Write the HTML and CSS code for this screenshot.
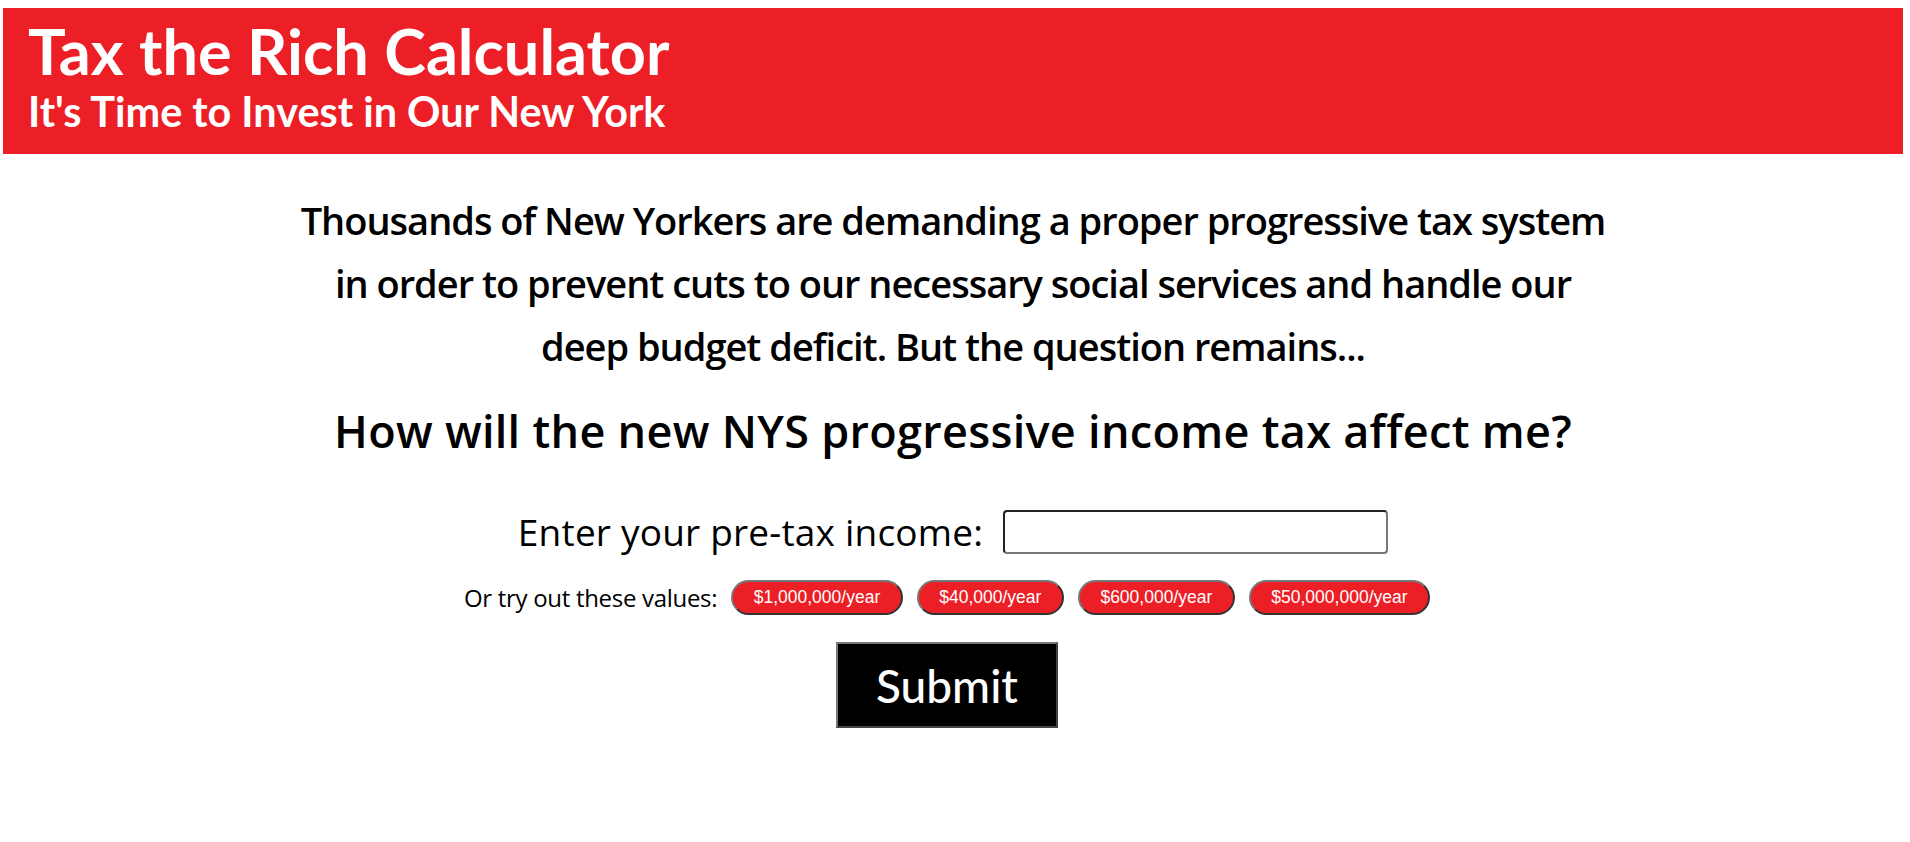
FILE: index.html
```html
<!DOCTYPE html>
<html lang="en">
<head>
<meta charset="utf-8">
<title>Tax the Rich Calculator</title>
<link rel="stylesheet" href="styles.css">
</head>
<body>
<header class="banner">
  <h1 class="banner-title">Tax the Rich Calculator</h1>
  <h2 class="banner-sub">It's Time to Invest in Our New York</h2>
</header>
<main class="content">
  <p class="intro">Thousands of New Yorkers are demanding a proper progressive tax system<br>in order to prevent cuts to our necessary social services and handle our<br>deep budget deficit. But the question remains...</p>
  <h3 class="question">How will the new NYS progressive income tax affect me?</h3>
  <form class="calc">
    <div class="income-row">
      <label class="income-label" for="income">Enter your pre-tax income:</label>
      <input class="income-input" id="income" type="text">
    </div>
    <div class="values-row">
      <span class="values-label">Or try out these values:</span>
      <button type="button" class="pill">$1,000,000/year</button>
      <button type="button" class="pill">$40,000/year</button>
      <button type="button" class="pill">$600,000/year</button>
      <button type="button" class="pill">$50,000,000/year</button>
    </div>
    <button type="submit" class="submit">Submit</button>
  </form>
</main>
</body>
</html>
```
FILE: styles.css
```css
body {
  margin: 8px 7px 0 3px;
  background: #ffffff;
  font-family: "Open Sans", "Noto Sans", sans-serif;
  color: #000;
}

.banner {
  background: #ec1f27;
  color: #fff;
  height: 146px;
  box-sizing: border-box;
  padding: 10px 0 0 25px;
}

.banner-title {
  margin: 0;
  font-family: "Lato", sans-serif;
  font-weight: 700;
  font-size: 63px;
  line-height: 66px;
}

.banner-sub {
  margin: 0;
  font-family: "Lato", sans-serif;
  font-weight: 700;
  font-size: 41.4px;
  line-height: 54px;
}

.content {
  text-align: center;
}

.intro {
  margin: 35px 0 0;
  font-size: 38px;
  font-weight: 600;
  line-height: 63px;
  letter-spacing: -1px;
}

.question {
  margin: 23px 0 0;
  font-size: 45px;
  font-weight: 600;
  line-height: 60px;
  letter-spacing: 0.3px;
}

.calc {
  margin-top: 49px;
  display: flex;
  flex-direction: column;
  align-items: center;
}

.income-row {
  display: flex;
  align-items: center;
  gap: 20px;
}

.income-label {
  font-size: 37px;
  font-weight: 400;
  line-height: 44px;
  letter-spacing: 0.2px;
}

.income-input {
  width: 385px;
  height: 44px;
  box-sizing: border-box;
  border: 2px solid;
  border-color: #222 #777 #777 #222;
  border-radius: 4px;
  font-size: 20px;
}

.values-row {
  margin-top: 26px;
  margin-right: 12px;
  display: flex;
  align-items: center;
  gap: 14px;
}

.values-label {
  font-size: 24px;
  line-height: 35px;
  letter-spacing: -0.3px;
}

.pill {
  height: 35px;
  padding: 0 20.5px;
  background: #ec1f27;
  color: #fff;
  font-family: "Liberation Sans", Arial, sans-serif;
  font-size: 17.5px;
  border: 2px solid;
  border-color: #777 #333 #333 #777;
  border-radius: 18px;
}

.submit {
  margin-top: 27px;
  margin-right: 12px;
  width: 222px;
  height: 86px;
  box-sizing: border-box;
  background: #000;
  color: #fff;
  font-family: "Lato", sans-serif;
  font-weight: 500;
  font-size: 46px;
  border: 2px solid;
  border-color: #777 #444 #444 #777;
}
```
